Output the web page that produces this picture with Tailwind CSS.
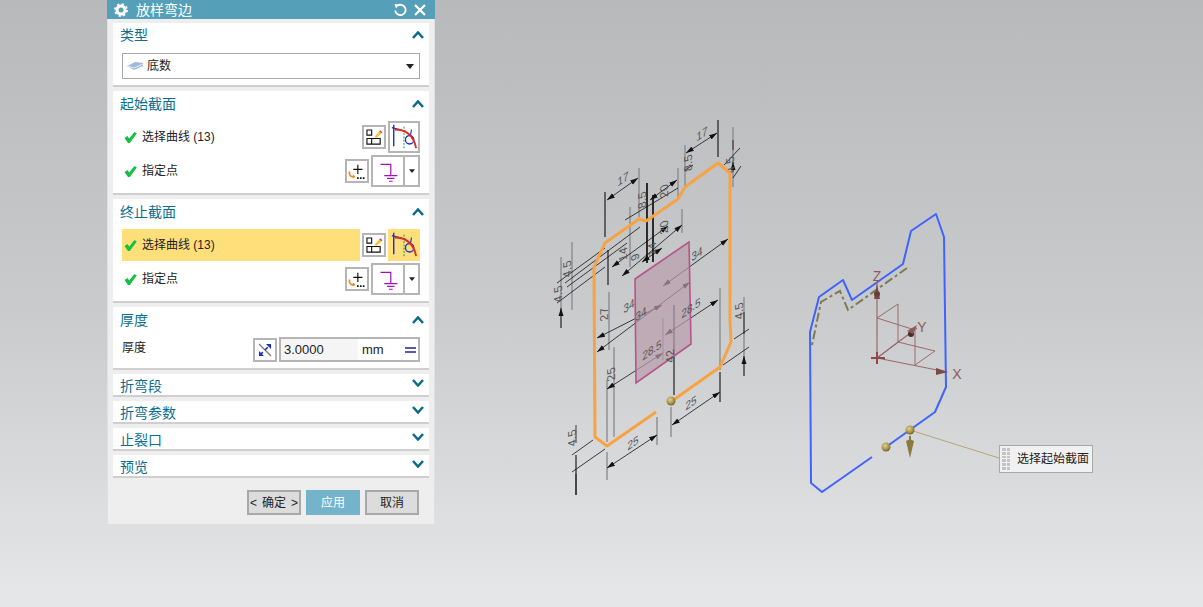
<!DOCTYPE html>
<html lang="zh">
<head>
  <meta charset="UTF-8" />
  <title>放样弯边</title>
  <script src="https://cdn.jsdelivr.net/npm/@tailwindcss/browser@4"></script>
</head>
<body class="relative w-[1203px] h-[607px] overflow-hidden bg-gradient-to-b from-[#b8b9ba] via-[#c9cacb] to-[#e6e7e9] font-['Liberation_Sans','Noto_Sans_CJK_SC',sans-serif] text-[12px] text-[#222]">

  <svg class="absolute w-0 h-0">
    <defs>
      <symbol id="check" viewBox="0 0 13 13"><path d="M0.500 7 L3.500 5 L5.200 7.500 L10.500 1 L12.800 2.500 L5.800 12 L4 12 Z" fill="#14c040"/></symbol>
      <symbol id="up" viewBox="0 0 12 8"><path d="M1 7 L6 1.500 L11 7" fill="none" stroke="#0a6a8c" stroke-width="2.500"/></symbol>
      <symbol id="down" viewBox="0 0 12 8"><path d="M1 1 L6 6.500 L11 1" fill="none" stroke="#0a6a8c" stroke-width="2.500"/></symbol>
      <symbol id="caret" viewBox="0 0 8 5"><path d="M0 0 H8 L4 5 Z" fill="#222"/></symbol>
      <symbol id="sketch" viewBox="0 0 18 18">
        <path d="M1 1 H6 V6.500 H1 Z M1 10 H6 V16 H1 Z M6 10 H15 V16 H6 Z" fill="#fff" stroke="#111" stroke-width="1.200"/>
        <path d="M9 8.500 L14 2.500 L16.500 4.500 L11 9.500 Z" fill="#f2c230"/><path d="M14.500 2 L17 4" stroke="#d8432c" stroke-width="1.600"/>
      </symbol>
      <symbol id="curve" viewBox="0 0 30 30">
        <path d="M4 2 V25" stroke="#1c2ccf" stroke-width="1.500" fill="none"/>
        <path d="M2 5 L17 9" stroke="#1c2ccf" stroke-width="1.500" fill="none"/>
        <path d="M15 4 V27" stroke="#0a8a6a" stroke-width="1" stroke-dasharray="2 1.500" fill="none"/>
        <circle cx="21" cy="18" r="4.500" fill="none" stroke="#1c2ccf" stroke-width="1.400"/>
        <path d="M23 7 L22 13" stroke="#1c2ccf" stroke-width="1.200" fill="none"/>
        <path d="M5 7 C15 7 25 11 28 27" stroke="#d8301c" stroke-width="2" fill="none"/>
      </symbol>
      <symbol id="point" viewBox="0 0 24 24">
        <path d="M13 4 V15 M7.500 9.500 H18.500" stroke="#111" stroke-width="1.400" fill="none"/>
        <path d="M3 12 C2 17 5 19 9 18" stroke="#ee8a22" stroke-width="2.200" fill="none"/>
        <path d="M7 16 L10 18 L7 20.500 Z" fill="#ee8a22"/>
        <path d="M12 20 h2 M15.500 20 h2 M19 20 h2" stroke="#111" stroke-width="2" fill="none"/>
      </symbol>
      <symbol id="ground" viewBox="0 0 30 30">
        <path d="M7 8 H18 V20 M11 20 H25 M14 23 H22 M16 26 H20" stroke="#a012b8" stroke-width="1.300" fill="none"/>
      </symbol>
      <marker id="arr" viewBox="0 0 8 6" refX="8" refY="3" markerWidth="8" markerHeight="6" orient="auto-start-reverse" markerUnits="userSpaceOnUse"><path d="M0 0.500 L8 3 L0 5.500 Z" fill="#111"/></marker>
      <radialGradient id="ball" cx="40%" cy="35%" r="70%"><stop offset="0" stop-color="#e4d28e"/><stop offset="0.600" stop-color="#a8914a"/><stop offset="1" stop-color="#6e5f2c"/></radialGradient>
    </defs>
  </svg>

  <!-- 圖形區 -->
  <svg class="absolute inset-0" width="1203" height="607" viewBox="0 0 1203 607">
    <!-- 尺寸界線 -->
    <g stroke="#8c8d8e" stroke-width="1.400" fill="none">
      <path d="M733 127 V187 M685 145 V187 M678 168 V197 M639 168 V217 M630 207 V267 M682 209 V233"/>
      <path d="M561 257 V328 M572 242 V310 M609 292 V350 M663 318 V360 M720 288 V370 M671 407 V437 M657 417 V445 M607 452 V480 M607 380 V442 M614 347 V437 M744 297 V376"/>
    </g>
    <g stroke="#111" stroke-width="1.100" fill="none">
      <path d="M718 120 V157 M605 192 V237 M608 250 V285 M720 372 V402 M674 305 V395 M576 455 V495"/>
      <path d="M647 183 V263 M653 195 V262" stroke-width="1.700"/>
    </g>
    <!-- 尺寸線 -->
    <g stroke="#111" stroke-width="0.800" fill="none">
      <path d="M686 153 L717 133" marker-start="url(#arr)" marker-end="url(#arr)"/>
      <path d="M607 200 L638 178" marker-start="url(#arr)" marker-end="url(#arr)"/>
      <path d="M650 200 L677 180" marker-start="url(#arr)" marker-end="url(#arr)"/>
      <path d="M622 276 L682 225" marker-start="url(#arr)" marker-end="url(#arr)"/>
      <path d="M612 267 L668 226" marker-start="url(#arr)" marker-end="url(#arr)"/>
      <path d="M642 262 L662 248" marker-start="url(#arr)" marker-end="url(#arr)"/>
      <path d="M663 286 L728 239" marker-start="url(#arr)" marker-end="url(#arr)"/>
      <path d="M597 338 L662 305" marker-start="url(#arr)" marker-end="url(#arr)"/>
      <path d="M597 352 L690 282" marker-start="url(#arr)" marker-end="url(#arr)"/>
      <path d="M607 389 L663 353" marker-start="url(#arr)" marker-end="url(#arr)"/>
      <path d="M665 335 L718 300" marker-start="url(#arr)" marker-end="url(#arr)"/>
      <path d="M672 425 L720 392" marker-start="url(#arr)" marker-end="url(#arr)"/>
      <path d="M607 468 L657 435" marker-start="url(#arr)" marker-end="url(#arr)"/>
      <path d="M557 283 L605 248 M565 283 L640 227 M567 287 L627 243 M557 303 L605 267 M625 220 L678 188 M685 170 L693 165 M724 165 L740 148 M733 178 L741 166"/>
      <path d="M734 339 L749 329 M723 365 L749 347 M572 455 L593 440 M572 472 L605 449"/>
      <path d="M576 425 V443 M576 495 V474 M744 312 V334 M744 376 V356" marker-end="url(#arr)"/>
      <path d="M733 140 V150 M733 172 V162" marker-end="url(#arr)"/>
      <path d="M561 328 V308" marker-end="url(#arr)"/>
    </g>
    <!-- 粉色面 -->
    <path d="M635 279 L689 242 L691 344 L636 383 Z" fill="#b89cab" fill-opacity="0.700" stroke="#b5558a" stroke-width="1.600"/>
    <!-- 尺寸文字 -->
    <g fill="#555" font-size="12" font-family="Liberation Sans" text-anchor="middle">
      <text transform="matrix(0.82 -0.57 0 1 702 138)">17</text>
      <text transform="matrix(0.82 -0.57 0 1 623 183)">17</text>
      <text transform="matrix(0 -1 0.95 -0.3 692 162)">8.5</text>
      <text transform="matrix(0 -1 0.95 -0.3 646 199)">8.5</text>
      <text transform="matrix(0 -1 0.95 -0.3 668 190)">20</text>
      <text transform="matrix(0 -1 0.95 -0.3 668 226)">20</text>
      <text transform="matrix(0 -1 0.95 -0.3 627 253)">14</text>
      <text transform="matrix(0 -1 0.95 -0.3 656 248)">14</text>
      <text transform="matrix(0 -1 0.95 -0.3 639 256)">9</text>
      <text transform="matrix(0.82 -0.57 0 1 697 258)">34</text>
      <text transform="matrix(0.82 -0.57 0 1 629 310)">34</text>
      <text transform="matrix(0.82 -0.57 0 1 641 318)">34</text>
      <text transform="matrix(0 -1 0.95 -0.3 608 313)">27</text>
      <text transform="matrix(0.82 -0.57 0 1 691 312)">28.5</text>
      <text transform="matrix(0.82 -0.57 0 1 652 354)">28.5</text>
      <text transform="matrix(0 -1 0.95 -0.3 674 355)">42</text>
      <text transform="matrix(0 -1 0.95 -0.3 615 373)">25</text>
      <text transform="matrix(0.82 -0.57 0 1 691 407)">25</text>
      <text transform="matrix(0.82 -0.57 0 1 633 447)">25</text>
      <text transform="matrix(0 -1 0.95 -0.3 576 437)">4.5</text>
      <text transform="matrix(0 -1 0.95 -0.3 743 310)">4.5</text>
      <text transform="matrix(0 -1 0.95 -0.3 562 293)">4.5</text>
      <text transform="matrix(0 -1 0.95 -0.3 571 268)">4.5</text>
      <text transform="matrix(0 -1 0.95 -0.3 734 164)">4.5</text>
    </g>
    <!-- 橙色截面 -->
    <path d="M672 401 L720 367 L731 342 L730 320 L730 173 L718 163 L685 187 L678 199 L646 221 L639 219 L605 243 L594 267 L595 437 L607 446 L656 412" fill="none" stroke="#f7a344" stroke-width="3" stroke-linejoin="round"/>
    <!-- 虛線 -->
    <path d="M907 268 L848 310 L840 291 L821 302 L812 345" fill="none" stroke="#7e7a55" stroke-width="2" stroke-dasharray="9 3 3 3"/>
    <!-- 藍色截面 -->
    <path d="M872 457 L822 492 L811 483 L810 332 L819 297 L843 280 L852 300 L903 264 L911 231 L936 214 L944 237 L946 387 L935 412 L886 447" fill="none" stroke="#3f63ff" stroke-width="2" stroke-linejoin="round"/>
    <!-- 座標系 -->
    <g fill="none" stroke="#9b6a6a" stroke-width="1">
      <path d="M877 318 L898 304 V342 M877 318 L915 330 V365 M898 342 L935 351 L915 365 M877 358 L898 342"/>
      <path d="M877 282 V358 M877 358 L947 372 M877 358 L917 328" stroke-width="1.200"/>
      <path d="M871 358 H885 M877 352 V364" stroke="#8c4a4a" stroke-width="2"/>
    </g>
    <path d="M874 299 L877 284 L880 299 Z M936 368 L948 372 L936 375 Z" fill="#7a4a4a"/>
    <circle cx="877" cy="294" r="3" fill="#6b3d3d"/><circle cx="911" cy="334" r="3" fill="#4a2d2d"/>
    <path d="M907 331 L917 325 L913 334 Z" fill="#8c5a5a"/>
    <g fill="#8c5a5a" font-size="14" font-family="Liberation Sans" text-anchor="middle">
      <text x="877" y="281">Z</text><text x="922" y="332">Y</text><text x="957" y="379">X</text>
    </g>
    <!-- 原點與提示線 -->
    <path d="M910 430 L999 458" stroke="#b5a678" stroke-width="1"/>
    <path d="M910 436 V441" stroke="#8a7a40" stroke-width="2"/>
    <path d="M906 441 Q910 438 914 441 L910 458 Z" fill="#8a7a40"/>
    <circle cx="671" cy="401" r="4.500" fill="url(#ball)"/>
    <circle cx="886" cy="447" r="4.500" fill="url(#ball)"/>
    <circle cx="910" cy="430" r="4.500" fill="url(#ball)"/>
  </svg>

  <!-- 提示標籤 -->
  <div class="absolute left-[999px] top-[445px] w-[94px] h-[28px] flex items-center bg-[#f1f1f1] border border-[#a9a9a9]">
    <div class="w-[8px] h-[22px] ml-[2px] grid grid-cols-2 gap-[1px]">
      <span class="bg-[#c4c4c4]"></span><span class="bg-[#c4c4c4]"></span><span class="bg-[#c4c4c4]"></span><span class="bg-[#c4c4c4]"></span>
      <span class="bg-[#c4c4c4]"></span><span class="bg-[#c4c4c4]"></span><span class="bg-[#c4c4c4]"></span><span class="bg-[#c4c4c4]"></span>
      <span class="bg-[#c4c4c4]"></span><span class="bg-[#c4c4c4]"></span><span class="bg-[#c4c4c4]"></span><span class="bg-[#c4c4c4]"></span>
    </div>
    <span class="ml-[7px] text-[12px] whitespace-nowrap">选择起始截面</span>
  </div>

  <!-- 對話框 -->
  <div class="relative ml-[107px] w-[328px] h-[525px] bg-[#eeeeee] border-x border-b border-[#e0e0e0] flex flex-col">
    <div class="h-[19px] -mx-px bg-[#559fb9] flex items-center text-white pl-[7px] pr-[9px] shrink-0">
      <svg class="w-[14px] h-[14px]" viewBox="0 0 14 14"><circle cx="7" cy="7" r="4" fill="none" stroke="#fff" stroke-width="3"/><circle cx="7" cy="7" r="6" fill="none" stroke="#fff" stroke-width="1.800" stroke-dasharray="2.300 2.400"/></svg>
      <span class="ml-[8px] text-[14px] leading-none">放样弯边</span>
      <svg class="ml-auto w-[14px] h-[14px]" viewBox="0 0 14 14"><path d="M4 3 A5.200 5.200 0 1 1 2.200 7.500" fill="none" stroke="#fff" stroke-width="1.800"/><path d="M1.500 1 L6 1.500 L3 5.500 Z" fill="#fff"/></svg>
      <svg class="ml-[7px] w-[12px] h-[12px]" viewBox="0 0 12 12"><path d="M1 1 L11 11 M11 1 L1 11" stroke="#fff" stroke-width="2.200"/></svg>
    </div>

    <div class="px-[5px] pt-[4px] flex flex-col gap-[4px]">
      <!-- 類型 -->
      <section class="h-[64px] bg-white border-b-2 border-[#cfcfcf] pl-[7px] pr-[9px]">
        <div class="h-[24px] flex items-center justify-between text-[#0b6e8e] text-[14px]"><span>类型</span><svg class="-mr-[4px] w-[12px] h-[8px]"><use href="#up"/></svg></div>
        <div class="mt-[6px] h-[26px] ml-[2px] flex items-center border border-[#a8a8a8] px-[4px]">
          <svg class="w-[17px] h-[10px]" viewBox="0 0 17 10"><path d="M0 5 L8 1 L16 2 L16 5 L7 9 Z" fill="#9fbbdc"/><path d="M0 5 L7 7 L16 3" stroke="#e8eef7" fill="none"/></svg>
          <span class="ml-[3px]">底数</span>
          <svg class="ml-auto mr-[1px] w-[8px] h-[5px]"><use href="#caret"/></svg>
        </div>
      </section>

      <!-- 起始截面 -->
      <section class="h-[104px] bg-white border-b-2 border-[#cfcfcf] pl-[7px] pr-[9px]">
        <div class="h-[26px] flex items-center justify-between text-[#0b6e8e] text-[14px]"><span>起始截面</span><svg class="-mr-[4px] w-[12px] h-[8px]"><use href="#up"/></svg></div>
        <div class="mt-[4px] h-[32px] flex items-center">
          <svg class="ml-[4px] w-[13px] h-[13px]"><use href="#check"/></svg>
          <span class="ml-[5px]">选择曲线 (13)</span>
          <button class="ml-auto w-[24px] h-[24px] flex items-center justify-center border-2 border-[#b5b5b5]"><svg class="w-[17px] h-[17px]"><use href="#sketch"/></svg></button>
          <button class="ml-[2px] w-[32px] h-[32px] flex items-center justify-center border-2 border-[#b5b5b5]"><svg class="w-[28px] h-[28px]"><use href="#curve"/></svg></button>
        </div>
        <div class="mt-[2px] h-[32px] flex items-center">
          <svg class="ml-[4px] w-[13px] h-[13px]"><use href="#check"/></svg>
          <span class="ml-[5px]">指定点</span>
          <button class="ml-auto w-[24px] h-[24px] flex items-center justify-center border-2 border-[#b5b5b5]"><svg class="w-[21px] h-[21px]"><use href="#point"/></svg></button>
          <div class="ml-[2px] w-[49px] h-[32px] flex border-2 border-[#b5b5b5]">
            <div class="w-[30px] flex items-center justify-center"><svg class="w-[28px] h-[28px]"><use href="#ground"/></svg></div>
            <div class="flex-1 border-l-2 border-[#b5b5b5] flex items-center justify-center"><svg class="w-[6px] h-[4px]"><use href="#caret"/></svg></div>
          </div>
        </div>
      </section>

      <!-- 終止截面 -->
      <section class="h-[104px] bg-white border-b-2 border-[#cfcfcf] pl-[7px] pr-[9px]">
        <div class="h-[26px] flex items-center justify-between text-[#0b6e8e] text-[14px]"><span>终止截面</span><svg class="-mr-[4px] w-[12px] h-[8px]"><use href="#up"/></svg></div>
        <div class="mt-[4px] h-[32px] flex items-center">
          <div class="ml-[2px] w-[238px] h-full bg-[#ffdf7a] flex items-center">
            <svg class="ml-[2px] w-[13px] h-[13px]"><use href="#check"/></svg>
            <span class="ml-[5px]">选择曲线 (13)</span>
          </div>
          <button class="ml-auto w-[24px] h-[24px] flex items-center justify-center border-2 border-[#b5b5b5]"><svg class="w-[17px] h-[17px]"><use href="#sketch"/></svg></button>
          <button class="ml-[2px] w-[32px] h-[32px] flex items-center justify-center bg-[#ffdf7a]"><svg class="w-[28px] h-[28px]"><use href="#curve"/></svg></button>
        </div>
        <div class="mt-[2px] h-[32px] flex items-center">
          <svg class="ml-[4px] w-[13px] h-[13px]"><use href="#check"/></svg>
          <span class="ml-[5px]">指定点</span>
          <button class="ml-auto w-[24px] h-[24px] flex items-center justify-center border-2 border-[#b5b5b5]"><svg class="w-[21px] h-[21px]"><use href="#point"/></svg></button>
          <div class="ml-[2px] w-[49px] h-[32px] flex border-2 border-[#b5b5b5]">
            <div class="w-[30px] flex items-center justify-center"><svg class="w-[28px] h-[28px]"><use href="#ground"/></svg></div>
            <div class="flex-1 border-l-2 border-[#b5b5b5] flex items-center justify-center"><svg class="w-[6px] h-[4px]"><use href="#caret"/></svg></div>
          </div>
        </div>
      </section>

      <!-- 厚度 -->
      <section class="h-[63px] bg-white border-b-2 border-[#cfcfcf] pl-[7px] pr-[9px]">
        <div class="h-[26px] flex items-center justify-between text-[#0b6e8e] text-[14px]"><span>厚度</span><svg class="-mr-[4px] w-[12px] h-[8px]"><use href="#up"/></svg></div>
        <div class="mt-[4px] h-[25px] flex items-center">
          <span class="ml-[2px] -mt-[4px]">厚度</span>
          <button class="ml-auto w-[24px] h-[24px] flex items-center justify-center border-2 border-[#b5b5b5]">
            <svg class="w-[16px] h-[16px]" viewBox="0 0 16 16"><path d="M2 2 L14 14" stroke="#777" stroke-width="1.200"/><path d="M3 13 L13 3" stroke="#1c2ccf" stroke-width="1.600" stroke-dasharray="4 3"/><path d="M9 2 H14 V7 Z M2 9 V14 H7 Z" fill="#1c2ccf"/></svg>
          </button>
          <div class="ml-[2px] w-[141px] h-[25px] flex items-center border-2 border-[#b5b5b5]">
            <div class="w-[77px] h-full bg-[#f5f5f5] flex items-center pl-[3px] text-[13px]">3.0000</div>
            <span class="ml-[4px] text-[13px]">mm</span>
            <svg class="ml-auto mr-[2px] w-[11px] h-[6px]" viewBox="0 0 11 6"><path d="M0 1 H11 M0 5 H11" stroke="#23238e" stroke-width="1.500"/></svg>
          </div>
        </div>
      </section>

      <!-- 折疊區塊 -->
      <section class="h-[23px] bg-white border-b-2 border-[#cfcfcf] pl-[7px] pr-[9px] flex items-center justify-between text-[#0b6e8e] text-[14px]"><span class="mt-[3px]">折弯段</span><svg class="-mr-[4px] w-[12px] h-[8px] -mt-[3px]"><use href="#down"/></svg></section>
      <section class="h-[23px] bg-white border-b-2 border-[#cfcfcf] pl-[7px] pr-[9px] flex items-center justify-between text-[#0b6e8e] text-[14px]"><span class="mt-[3px]">折弯参数</span><svg class="-mr-[4px] w-[12px] h-[8px] -mt-[3px]"><use href="#down"/></svg></section>
      <section class="h-[23px] bg-white border-b-2 border-[#cfcfcf] pl-[7px] pr-[9px] flex items-center justify-between text-[#0b6e8e] text-[14px]"><span class="mt-[3px]">止裂口</span><svg class="-mr-[4px] w-[12px] h-[8px] -mt-[3px]"><use href="#down"/></svg></section>
      <section class="h-[23px] bg-white border-b-2 border-[#cfcfcf] pl-[7px] pr-[9px] flex items-center justify-between text-[#0b6e8e] text-[14px]"><span class="mt-[3px]">预览</span><svg class="-mr-[4px] w-[12px] h-[8px] -mt-[3px]"><use href="#down"/></svg></section>
    </div>

    <!-- 底部按鈕 -->
    <div class="mt-[12px] flex justify-end gap-[5px] pr-[15px]">
      <button class="w-[54px] h-[25px] bg-[#dcdcdc] border-2 border-[#a8a8a8] text-[12px] whitespace-nowrap flex items-center justify-center gap-[5px]"><span>&lt;</span><span>确定</span><span>&gt;</span></button>
      <button class="w-[54px] h-[25px] bg-[#74b3c9] text-white text-[12px]">应用</button>
      <button class="w-[54px] h-[25px] bg-[#dcdcdc] border-2 border-[#a8a8a8] text-[12px]">取消</button>
    </div>
  </div>
</body>
</html>
